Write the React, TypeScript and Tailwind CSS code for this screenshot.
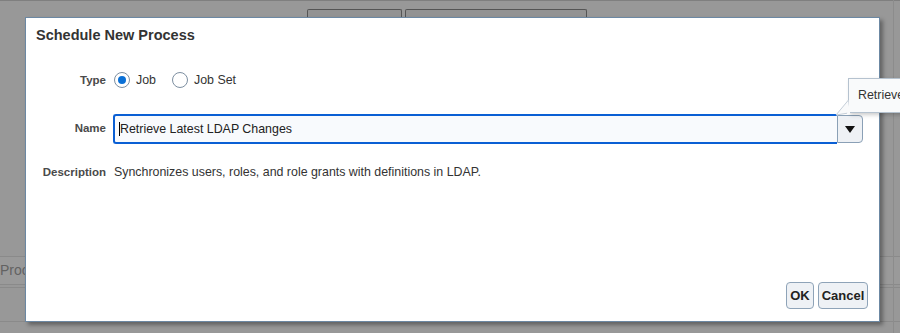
import React from "react";

export default function App() {
  return (
    <div
      className="relative w-[900px] h-[333px] overflow-hidden bg-[#989898]"
      style={{ fontFamily: '"Liberation Sans", Arial, sans-serif' }}
    >
      {/* page behind the modal */}
      <div className="flex flex-col h-full">
        <div className="h-px bg-[#7f7f7f]" />
        <div className="flex gap-[3px] pl-[307px] pt-[8px]">
          <div className="w-[95px] h-[12px] border border-b-0 border-[#555] rounded-t-[2px] bg-[#939393]" />
          <div className="w-[182px] h-[12px] border border-b-0 border-[#555] rounded-t-[2px] bg-[#939393]" />
        </div>
        <div className="mt-[235px] h-[29px] border-y border-[#8a8a8a] bg-[#9a9a9a] flex items-center">
          <span className="text-[14px] text-[#626262]">Process</span>
        </div>
        <div className="h-[2px]" />
        <div className="h-px bg-[#8a8a8a]" />
        <div className="mt-[33px] h-px bg-[#8a8a8a]" />
      </div>
      <div className="absolute top-0 right-[6px] w-px h-full bg-[#8c8c8c]" />

      {/* modal dialog */}
      <div className="absolute left-[25px] top-[17px] w-[855px] h-[305px] bg-white border border-[#6c88a3] shadow-[3px_3px_4px_rgba(0,0,0,0.35)] flex flex-col">
        <div className="pl-[10px] pt-[9px] text-[14.5px] font-bold text-[#333] leading-[16px]">
          Schedule New Process
        </div>

        <div className="grid grid-cols-[80px_1fr] gap-x-[8px] items-center mt-[26px] text-[12.4px] text-[#333]">
          <div className="text-right font-bold text-[11.5px] text-[#4a4a4a] h-[22px] leading-[22px]">Type</div>
          <div className="flex items-center gap-[6px] h-[22px]">
            <span className="w-[16px] h-[16px] rounded-full border border-[#7d8fa1] bg-white flex items-center justify-center">
              <span className="w-[8px] h-[8px] rounded-full bg-[#0a70d6]" />
            </span>
            <span>Job</span>
            <span className="ml-[10px] w-[16px] h-[16px] rounded-full border border-[#7d8fa1] bg-white" />
            <span>Job Set</span>
          </div>

          <div className="text-right font-bold text-[11.5px] text-[#4a4a4a] mt-[23px]">Name</div>
          <div className="flex mt-[23px] -ml-px">
            <div className="w-[724px] h-[30px] border-2 border-r-0 border-[#0a5fd4] rounded-l-[3px] bg-[#f8fafd] flex items-center pl-[4px]">
              <span className="w-px h-[14px] bg-black" />
              <span className="text-[#222]">Retrieve Latest LDAP Changes</span>
            </div>
            <div className="w-[26px] h-[28px] mt-px border border-[#8aa0b6] rounded-r-[4px] bg-[#eef1f5] flex items-center justify-center">
              <svg width="10" height="7" viewBox="0 0 10 7">
                <path d="M0 0 L10 0 L5 7 Z" fill="#111" />
              </svg>
            </div>
          </div>

          <div className="text-right font-bold text-[11.5px] text-[#4a4a4a] mt-[19px]">Description</div>
          <div className="mt-[19px] text-[#333]">
            Synchronizes users, roles, and role grants with definitions in LDAP.
          </div>
        </div>

        <div className="mt-auto flex justify-end gap-[4px] pr-[11px] pb-[12px]">
          <button className="w-[28px] h-[27px] border border-[#8ea3b8] rounded-[4px] bg-[#eef1f5] text-[13px] font-bold text-[#222]">
            OK
          </button>
          <button className="w-[50px] h-[27px] border border-[#8ea3b8] rounded-[4px] bg-[#eef1f5] text-[13px] font-bold text-[#222]">
            Cancel
          </button>
        </div>
      </div>

      {/* tooltip */}
      <div className="absolute left-[848px] top-[78px] h-[35px] bg-[#f9fafb] border border-[#b5c2cf] shadow-[2px_2px_4px_rgba(0,0,0,0.2)] flex items-center px-[9px] text-[12.4px] text-[#333] whitespace-nowrap">
        Retrieve Latest LDAP Changes
      </div>
      <svg className="absolute left-[835px] top-[100px]" width="15" height="16" viewBox="0 0 15 16">
        <path d="M13.5 0 L13.5 13 L1 15 Z" fill="#f9fafb" stroke="#c5ced8" strokeWidth="1" />
        <path d="M12 14 L15 14 L15 0 L14 0 Z" fill="#f9fafb" />
      </svg>
    </div>
  );
}
